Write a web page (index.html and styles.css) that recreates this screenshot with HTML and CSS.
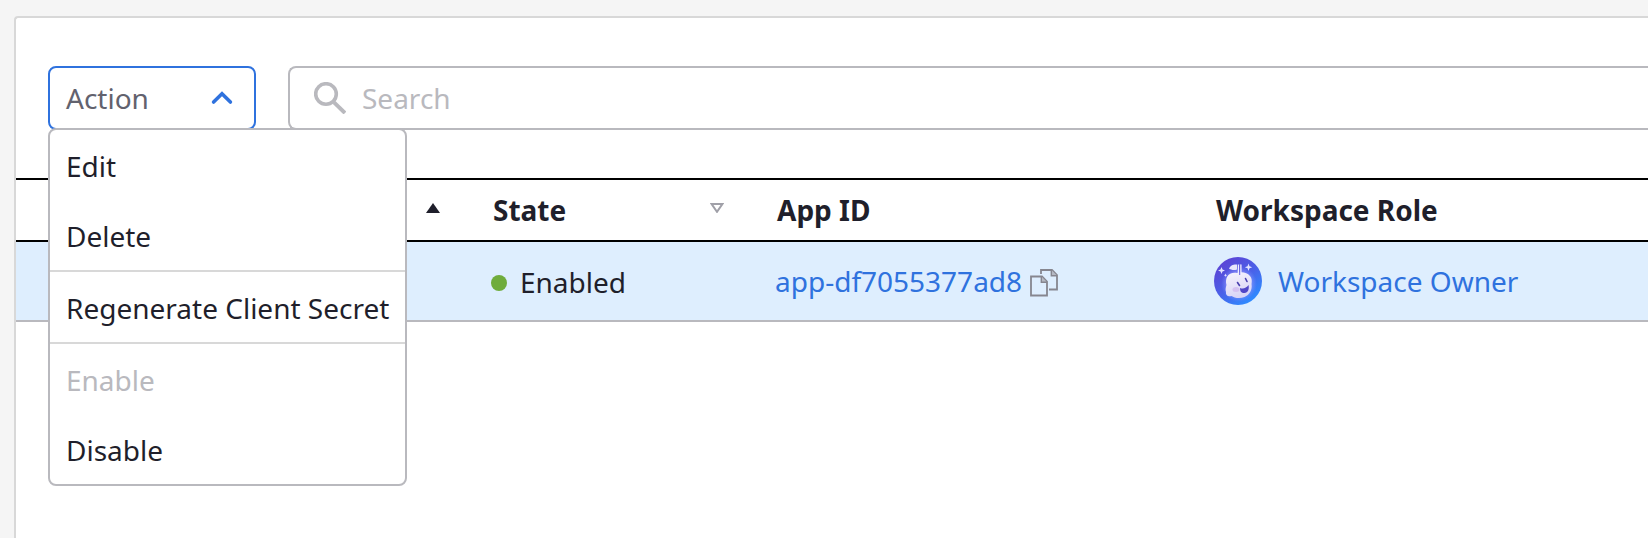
FILE: index.html
```html
<!DOCTYPE html>
<html lang="en">
<head>
<meta charset="utf-8">
<title>Apps</title>
<link rel="stylesheet" href="styles.css">
</head>
<body>
<main class="panel">
  <div class="toolbar">
    <div class="dropdown">
      <button class="dropdown-toggle" type="button" aria-haspopup="menu" aria-expanded="true">
        <span>Action</span>
        <svg class="chevron" viewBox="0 0 22 14" aria-hidden="true"><path d="M2.600 11 11 2.800 19.400 11"/></svg>
      </button>
      <ul class="menu" role="menu">
        <li role="none"><button class="menu-item" type="button" role="menuitem">Edit</button></li>
        <li role="none"><button class="menu-item" type="button" role="menuitem">Delete</button></li>
        <li class="divided" role="none"><button class="menu-item" type="button" role="menuitem">Regenerate Client Secret</button></li>
        <li class="divided" role="none"><button class="menu-item" type="button" role="menuitem" disabled>Enable</button></li>
        <li role="none"><button class="menu-item" type="button" role="menuitem">Disable</button></li>
      </ul>
    </div>
    <label class="search">
      <svg class="search-icon" viewBox="0 0 32 32" aria-hidden="true"><circle cx="12" cy="12" r="10.300"/><path class="handle" d="M20 20.400 31 31"/></svg>
      <input class="search-input" type="search" placeholder="Search" aria-label="Search">
    </label>
  </div>
  <table class="apps">
    <colgroup><col class="col-name"><col class="col-state"><col class="col-id"><col></colgroup>
    <thead>
      <tr>
        <th scope="col"><div class="heading name-heading"><button class="sort" type="button" aria-label="Sort by name"><svg viewBox="0 0 14 10" aria-hidden="true"><path class="sort-on" d="M7 0 14 10H0z"/></svg></button></div></th>
        <th scope="col"><div class="heading"><span>State</span><button class="sort" type="button" aria-label="Sort by state"><svg viewBox="0 0 14 10" aria-hidden="true"><path class="sort-off" d="M1.600 1h10.800L7 8.800z"/></svg></button></div></th>
        <th scope="col">App ID</th>
        <th scope="col">Workspace Role</th>
      </tr>
    </thead>
    <tbody>
      <tr>
        <td></td>
        <td><div class="cell state"><span class="dot"></span>Enabled</div></td>
        <td>
          <div class="cell app-id">
            <a class="link" href="#app">app-df7055377ad8</a>
            <button class="copy" type="button" aria-label="Copy app ID">
              <svg viewBox="0 0 28 28" aria-hidden="true"><path d="M1 7.500h11l5 5V26.500H1zM11.500 7.500v5.500H17M11 5V1h11l5 5v14.500h-8M21.500 1v5.500H27"/><path class="fold" d="M12 8l4.500 4.500H12zM22 1.500 26.500 6H22z"/></svg>
            </button>
          </div>
        </td>
        <td>
          <div class="cell role">
            <svg class="avatar" viewBox="0 0 48 48" aria-hidden="true">
              <defs>
                <linearGradient id="sky" x1="0.2" y1="0.1" x2="0.8" y2="0.9"><stop offset="0" stop-color="#5b45d6"/><stop offset="0.5" stop-color="#4a60e8"/><stop offset="1" stop-color="#2f8bff"/></linearGradient>
                <linearGradient id="body" x1="0" y1="0" x2="0.3" y2="1"><stop offset="0" stop-color="#f7f4fd"/><stop offset="1" stop-color="#d9d5f6"/></linearGradient>
                <radialGradient id="glow"><stop offset="0.6" stop-color="#a9a5ff" stop-opacity="0.7"/><stop offset="1" stop-color="#7b8cff" stop-opacity="0"/></radialGradient>
              </defs>
              <circle cx="24" cy="24" r="24" fill="url(#sky)"/>
              <circle cx="25" cy="27" r="18" fill="url(#glow)"/>
              <path d="M13 20c2-4 6-4.500 10-4 5-1.500 10-.5 13 3 2 2 2 5 1.500 8 1 6-2 11-7 13-5 2-10 1-13-1-4 1-6-1-5.500-4-1-3 0-5 .5-7-1-3-.5-6 .5-8z" fill="url(#body)"/>
              <path d="M15 11.500c2-4 5-4 8-4v5c-3 1-6 .5-8-1z" fill="#e9e6fb"/>
              <path d="M24.500 7.500v10M26.800 7.500v11" stroke="#f2efff" stroke-width="1.500" fill="none"/>
              <path d="M25.700 8v10" stroke="#665edb" stroke-width="1"/>
              <path d="M26 31c3 1.500 6.500 0 8.500-3 1 4-.5 8-4 8s-4.500-2-4.500-5z" fill="#5146c7"/>
              <path d="M23.500 25.500l2 3M31.500 21.500l1.500 3" stroke="#4a3fae" stroke-width="1.600" stroke-linecap="round"/>
              <ellipse cx="22" cy="32.500" rx="3.500" ry="2.500" fill="#cfb5ee" opacity="0.7"/>
              <path d="M7.500 10l1 2.500 2.500 1-2.500 1-1 2.500-1-2.500-2.500-1 2.500-1zM34.500 6.500l1 2.700 2.700 1-2.700 1-1 2.700-1-2.700-2.700-1 2.700-1zM11.500 16.500l.5 1.200 1.200.5-1.200.5-.5 1.200-.5-1.200-1.200-.5 1.200-.5z" fill="#e2e2ff"/>
            </svg>
            <a class="link" href="#role">Workspace Owner</a>
          </div>
        </td>
      </tr>
    </tbody>
  </table>
</main>
</body>
</html>
```
FILE: styles.css
```css
* {
  box-sizing: border-box;
}

body {
  margin: 0;
  min-height: 100vh;
  display: flex;
  flex-direction: column;
  background: #f5f5f5;
  color: #1f1f2b;
  font: 28px/38px "Noto Sans", sans-serif;
}

button,
input {
  margin: 0;
  padding: 0;
  border: 0;
  background: none;
  color: inherit;
  font: inherit;
}

svg {
  display: block;
}

.panel {
  flex: 1;
  margin: 16px 0 0 14px;
  border: solid #d8d8d8;
  border-width: 2px 0 0 2px;
  border-radius: 4px 0 0 0;
  background: #fff;
}

.toolbar {
  display: flex;
  gap: 32px;
  padding: 48px 0 48px 32px;
}

.dropdown {
  position: relative;
}

.dropdown-toggle {
  display: flex;
  align-items: center;
  justify-content: space-between;
  width: 208px;
  height: 64px;
  padding: 0 21px 0 16px;
  border: 2px solid #2f72de;
  border-radius: 8px;
  background: #fff;
  color: #62626e;
}

.chevron {
  width: 22px;
  height: 14px;
  fill: none;
  stroke: #2f72de;
  stroke-width: 3.6;
  stroke-linecap: round;
}

.menu {
  position: absolute;
  z-index: 1;
  top: calc(100% - 2px);
  left: 0;
  margin: 0;
  padding: 0;
  border: 2px solid #b9b9be;
  border-radius: 8px;
  background: #fff;
  list-style: none;
  white-space: nowrap;
}

.divided {
  border-top: 2px solid #d8d8d8;
}

.menu-item {
  display: block;
  width: 100%;
  padding: 17px 16px 15px;
  text-align: left;
}

.menu-item:disabled {
  color: #b9b9be;
}

.search {
  flex: 1;
  display: flex;
  align-items: center;
  gap: 16px;
  height: 64px;
  padding-left: 24px;
  border: 2px solid #b9b9be;
  border-right: 0;
  border-radius: 8px 0 0 8px;
  color: #b9b9be;
}

.search-icon {
  width: 32px;
  height: 32px;
  fill: none;
  stroke: #b9b9be;
  stroke-width: 3.6;
}

.handle {
  stroke-width: 4;
}

.search-input {
  flex: 1;
  min-width: 0;
  outline: 0;
  color: #1f1f2b;
}

.search-input::placeholder {
  color: #b9b9be;
  opacity: 1;
}

.apps {
  width: 100%;
  table-layout: fixed;
  border-collapse: separate;
  border-spacing: 0;
}

.col-name {
  width: 459px;
}

.col-state {
  width: 284px;
}

.col-id {
  width: 439px;
}

.apps th {
  height: 64px;
  padding: 0 18px;
  border: solid #000;
  border-width: 2px 0;
  text-align: left;
}

.apps td {
  height: 80px;
  padding: 0 16px;
  border-bottom: 2px solid #b9b9be;
  background: #deeefe;
}

.heading {
  display: flex;
  align-items: center;
  justify-content: space-between;
  padding-right: 17px;
}

.name-heading {
  justify-content: flex-end;
}

.sort {
  padding-bottom: 4px;
}

.sort svg {
  width: 14px;
  height: 10px;
}

.sort-on {
  fill: #1f1f2b;
}

.sort-off {
  fill: none;
  stroke: #a0a0a8;
  stroke-width: 2;
}

.cell {
  display: flex;
  align-items: center;
}

.state {
  gap: 13px;
  padding-top: 2px;
}

.dot {
  width: 16px;
  height: 16px;
  margin-top: 2px;
  border-radius: 50%;
  background: #6fac3c;
}

.app-id {
  gap: 8px;
}

.copy {
  padding-top: 4px;
}

.copy svg {
  width: 28px;
  height: 28px;
  fill: none;
  stroke: #86868f;
  stroke-width: 1.8;
}

.copy .fold {
  fill: #b4b8c2;
  stroke: none;
}

.role {
  gap: 16px;
}

.avatar {
  width: 48px;
  height: 48px;
}

.link {
  color: #2f72de;
  text-decoration: none;
}
```
